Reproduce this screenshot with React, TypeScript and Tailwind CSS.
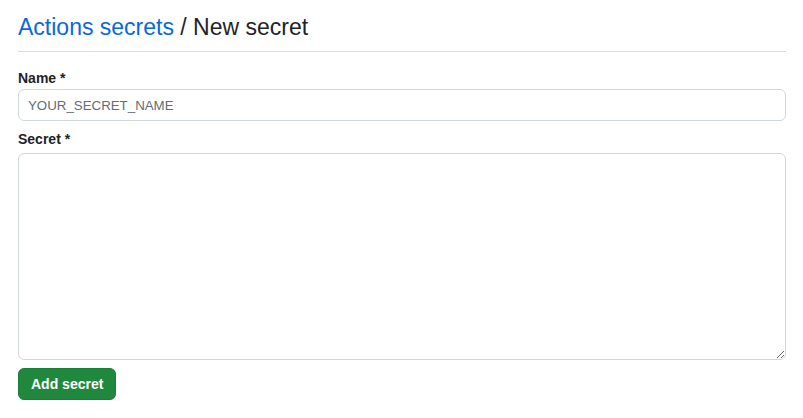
import React from "react";

export default function App() {
  return (
    <div
      className="w-[803px] h-[418px] bg-white pl-[18px] pr-[17px] overflow-hidden"
      style={{ fontFamily: '"Liberation Sans", Arial, sans-serif' }}
    >
      <div className="pt-[12px] pb-[9px] border-b border-[#d8dee4]">
        <h2 className="text-[23px] leading-[30px] font-normal text-[#1f2328]">
          <span className="text-[#0969da]">Actions secrets</span> / New secret
        </h2>
      </div>
      <form className="mt-[16px] flex flex-col" onSubmit={(e) => e.preventDefault()}>
        <label className="text-[14px] leading-[20px] font-bold text-[#1f2328] mb-[1px]">
          Name *
        </label>
        <input
          className="h-[32px] w-full rounded-[6px] border border-[#d0d7de] px-[9px] text-[13.3px] text-[#1f2328] placeholder:text-[#636c76] outline-none"
          placeholder="YOUR_SECRET_NAME"
        />
        <label className="mt-[8px] text-[14px] leading-[20px] font-bold text-[#1f2328] mb-[4px]">
          Secret *
        </label>
        <textarea className="h-[207px] w-full rounded-[6px] border border-[#d0d7de] px-[9px] py-[8px] text-[13.3px] outline-none" />
        <div className="mt-[8px]">
          <button
            type="submit"
            className="h-[32px] px-[12px] rounded-[6px] bg-[#1f883d] text-white text-[14px] font-bold border border-[#1a7f37]"
          >
            Add secret
          </button>
        </div>
      </form>
    </div>
  );
}
